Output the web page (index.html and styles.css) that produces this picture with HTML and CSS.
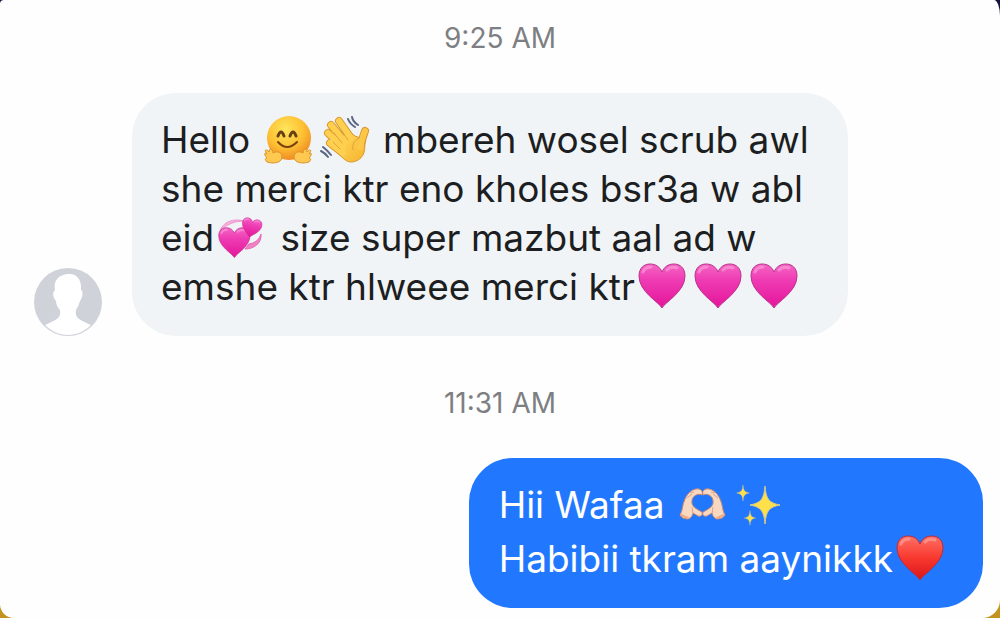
FILE: index.html
```
<!DOCTYPE html>
<html lang="en">
<head>
  <meta charset="UTF-8">
  <meta name="viewport" content="width=device-width, initial-scale=1.0">
  <title>Chat</title>
  <link rel="stylesheet" href="styles.css">
</head>
<body>

  <!-- Shared emoji shapes -->
  <svg class="defs" width="0" height="0" aria-hidden="true">
    <defs>
      <linearGradient id="pink" x1="0" y1="0" x2="0" y2="1">
        <stop offset="0" stop-color="#f565c4"/>
        <stop offset=".35" stop-color="#ef3db4"/>
        <stop offset="1" stop-color="#e4149a"/>
      </linearGradient>
      <linearGradient id="red" x1="0" y1="0" x2="0" y2="1">
        <stop offset="0" stop-color="#ff7065"/>
        <stop offset=".5" stop-color="#f8382f"/>
        <stop offset="1" stop-color="#d9161b"/>
      </linearGradient>
      <radialGradient id="face" cx=".42" cy=".3" r=".75">
        <stop offset="0" stop-color="#ffe65c"/>
        <stop offset=".55" stop-color="#fdc032"/>
        <stop offset="1" stop-color="#ee8423"/>
      </radialGradient>
      <linearGradient id="palm" x1="0" y1="0" x2="1" y2="1">
        <stop offset="0" stop-color="#ffd95c"/>
        <stop offset="1" stop-color="#f6b42c"/>
      </linearGradient>
      <path id="heart" d="M27 45C24 39 4 29 4 13C4 5 9 1 15 1C21 1 25 4 27 9C29 4 33 1 39 1C45 1 50 5 50 13C50 29 30 39 27 45Z"/>
      <path id="star" d="M0 -19C1 -6 4 -2 15 0C4 2 1 6 0 19C-1 6 -4 2 -15 0C-4 -2 -1 -6 0 -19Z"/>
      <g id="pink-heart">
        <use href="#heart" fill="url(#pink)" stroke="#b9338d" stroke-width="1"/>
        <path d="M8 9Q10 4 16 4M32 7Q36 3 42 5" fill="none" stroke="#fba3dc" stroke-width="3" stroke-linecap="round" opacity=".6"/>
      </g>
      <g id="heart-hand">
        <path d="M5 34C8 29 7 24 10 18C13 11 19 7 24 8C27 9 28 11 27 14C23 12 17 15 17 20C16 25 21 28 27 31C28 34 26 36 23 35L18 32C17 36 15 38 12 38Q7 38 5 34Z" fill="#f9d8c2" stroke="#bd8677" stroke-width="1"/>
        <path d="M12 17L17 13M15 12L19 11M17 26L18 33" fill="none" stroke="#d9a48c" stroke-width="1"/>
        <path d="M6 34L13 37" stroke="#f0a982" stroke-width="2" stroke-linecap="round"/>
      </g>
    </defs>
  </svg>

  <main class="chat">
    <time class="timestamp" datetime="09:25">9:25 AM</time>

    <div class="message received">
      <svg class="avatar" viewBox="0 0 68 68" role="img" aria-label="Profile picture">
        <circle cx="34" cy="34" r="34" fill="#d0d2da"/>
        <path d="M34 6C42 5 48 11 47 22C50 23 48 31 46 33C45 37 43 40 42 42C41 50 44 51 57 57C51 63 43 67 34 67C25 67 17 63 11 57C24 51 27 50 26 42C24 40 22 37 22 33C19 30 18 24 21 22C19 12 25 7 34 6Z" fill="#fff"/>
      </svg>
      <p class="bubble">
        Hello <svg class="emoji" viewBox="0 0 56 48" role="img" aria-label="hugging face">
          <circle cx="28" cy="22" r="22" fill="url(#face)"/>
          <path d="M17 20Q20 12 23 20M29 20Q32 12 35 20" fill="none" stroke="#674013" stroke-width="3" stroke-linecap="round"/>
          <path d="M17 26Q26 36 36 26" fill="none" stroke="#764211" stroke-width="2" stroke-linecap="round"/>
          <g fill="#ffc951" stroke="#d99228" stroke-width="1" stroke-linejoin="round">
            <path d="M6 46C3 43 5 42 6 42C2 38 4 36 6 38C2 33 6 33 8 36C8 31 12 33 12 37C17 34 21 37 21 41C21 47 12 48 6 46Z"/>
            <path d="M48 46C51 43 49 42 48 42C52 38 50 36 48 38C52 33 48 33 46 36C46 31 42 33 42 37C37 34 33 37 33 41C33 47 42 48 48 46Z"/>
          </g>
        </svg><svg class="emoji" viewBox="0 0 56 48" role="img" aria-label="waving hand">
          <g fill="none" stroke-linecap="round" stroke-linejoin="round">
            <path d="M28 26L14 9M34 22L22 5M26 31L11 17M26 37L13 27" stroke="#d9982e" stroke-width="8"/>
            <path d="M44 30C45 24 46 20 48 15" stroke="#d9982e" stroke-width="8"/>
            <path d="M23 24C28 16 33 15 38 20L46 23C50 33 47 42 39 45C32 48 27 44 22 38Z" fill="url(#palm)" stroke="#d9982e" stroke-width="1"/>
            <path d="M28 26L14 9M34 22L22 5M26 31L11 17M26 37L13 27" stroke="#ffcf50" stroke-width="6"/>
            <path d="M43 31C45 24 46 20 48 15" stroke="#fcc747" stroke-width="6"/>
            <path d="M25 27L17 17M31 24L24 14M23 33L16 26M42 22Q34 26 36 34" stroke="#e2a238" stroke-width="1"/>
            <path d="M31 3Q33 8 38 11M35 1Q36 6 41 9M6 31Q10 34 14 39M4 35Q8 37 11 41" stroke="#5c6684" stroke-width="2"/>
          </g>
        </svg> mbereh wosel scrub awl<br>
        she merci ktr eno kholes bsr3a w abl<br>
        eid<svg class="emoji" viewBox="0 0 56 48" role="img" aria-label="revolving hearts">
          <path d="M6 17C9 8 19 4 30 7C21 7 13 10 6 17Z" fill="#f7b5de" stroke="#ee93cd" stroke-width="1"/>
          <path d="M47 20C48 29 40 35 31 35L35 30C41 29 45 26 47 20Z" fill="#f081c5" stroke="#e567b5" stroke-width="1"/>
          <g transform="translate(2 13) scale(.68)"><use href="#pink-heart"/></g>
          <g transform="translate(28 2) rotate(12) scale(.43)"><use href="#pink-heart"/></g>
        </svg> size super mazbut aal ad w<br>
        emshe ktr hlweee merci ktr<svg class="emoji" viewBox="0 0 56 48" role="img" aria-label="pink heart"><use href="#pink-heart"/></svg><svg class="emoji" viewBox="0 0 56 48" role="img" aria-label="pink heart"><use href="#pink-heart"/></svg><svg class="emoji" viewBox="0 0 56 48" role="img" aria-label="pink heart"><use href="#pink-heart"/></svg>
      </p>
    </div>

    <time class="timestamp" datetime="11:31">11:31 AM</time>

    <div class="message sent">
      <p class="bubble">
        Hii Wafaa <svg class="emoji" viewBox="0 0 56 48" role="img" aria-label="heart hands">
          <use href="#heart-hand"/>
          <use href="#heart-hand" transform="translate(55 0) scale(-1 1)"/>
        </svg><svg class="emoji" viewBox="0 0 56 48" role="img" aria-label="sparkles">
          <g fill="#ffe04a" stroke="#d8c98b" stroke-width="1">
            <use href="#star" transform="translate(34 24)"/>
            <use href="#star" transform="translate(12 12) scale(.42)"/>
            <use href="#star" transform="translate(19 37) scale(.38)"/>
          </g>
        </svg><br>
        Habibii tkram aaynikkk<svg class="emoji" viewBox="0 0 56 48" role="img" aria-label="red heart">
          <use href="#heart" fill="url(#red)" stroke="#b52d3c" stroke-width="1"/>
          <path d="M8 9Q10 4 16 4M32 7Q36 3 42 5" fill="none" stroke="#ffaaa2" stroke-width="3" stroke-linecap="round" opacity=".6"/>
        </svg>
      </p>
    </div>
  </main>

</body>
</html>
```
FILE: styles.css
```
body {
  margin: 0;
  font-family: Inter, "Liberation Sans", sans-serif;
  background: linear-gradient(#12123a 50%, #c39320 50%);
}

.defs {
  position: absolute;
}

.chat {
  display: flex;
  flex-direction: column;
  box-sizing: border-box;
  min-height: 100vh;
  padding: 21px 0 10px;
  background: #fefefe;
  border-radius: 4px 6px 18px 14px / 4px 16px 18px 14px;
}

.timestamp {
  text-align: center;
  font-size: 28px;
  line-height: 34px;
  color: #7d7f83;
}

.message {
  display: flex;
  align-items: flex-end;
  margin-top: 38px;
}

.received {
  gap: 30px;
  padding-left: 34px;
  margin-bottom: 50px;
}

.sent {
  justify-content: flex-end;
  padding-right: 17px;
}

.avatar {
  flex: none;
  width: 68px;
  height: 68px;
}

.bubble {
  margin: 0;
  border-radius: 44px;
  font-size: 37px;
  white-space: nowrap;
}

.received .bubble {
  flex: 0 1 658px;
  padding: 22px 29px 25px;
  line-height: 49px;
  color: #1c1e21;
  background: #f1f4f6;
}

.sent .bubble {
  padding: 20px 34px 22px 30px;
  line-height: 54px;
  color: #fff;
  background: #2178ff;
}

/* Emoji sit in the text line like a wide glyph */
.emoji {
  width: 56px;
  height: 48px;
  vertical-align: -11px;
}
```
